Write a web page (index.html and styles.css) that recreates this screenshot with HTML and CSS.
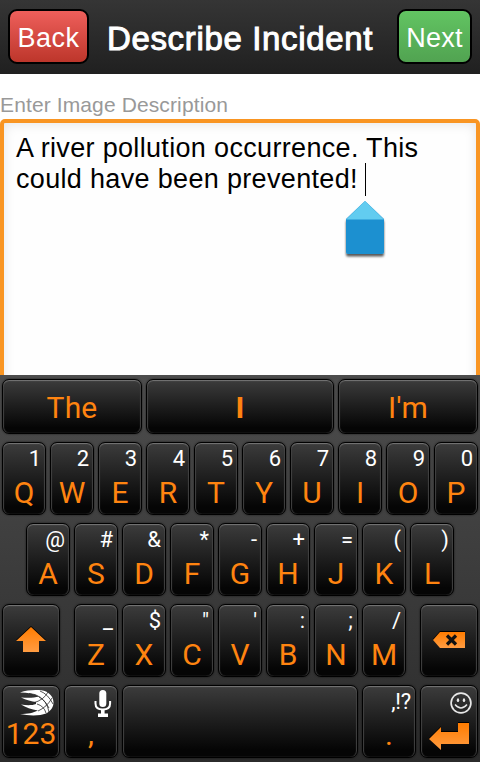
FILE: index.html
```html
<!DOCTYPE html>
<html lang="en">
<head>
<meta charset="utf-8">
<title>Describe Incident</title>
<link rel="stylesheet" href="styles.css">
</head>
<body>
<header class="bar">
  <button class="btn back">Back</button>
  <h1>Describe Incident</h1>
  <button class="btn next">Next</button>
</header>
<main class="form">
  <label class="label">Enter Image Description</label>
  <div class="field">A river pollution occurrence. This<br>could have been prevented! <span class="caret"><svg class="handle" width="46" height="62" viewBox="0 0 46 62"><defs><filter id="sh" x="-20%" y="-20%" width="140%" height="140%"><feDropShadow dx="0" dy="2.5" stdDeviation="1.3" flood-color="#000" flood-opacity=".65"/></filter></defs><path filter="url(#sh)" fill="#1f90d0" d="M23 3 42 21V54q0 2-2 2H6q-2 0-2-2V21z"/><path fill="#62ccf0" d="M23 3 42 21.5H4z"/></svg></span></div>
</main>
<section class="keyboard">
  <div class="suggest"><div class="key word">The</div><div class="key word strong">I</div><div class="key word">I'm</div></div>
  <div class="row">
    <div class="key"><i>1</i><b>Q</b></div><div class="key"><i>2</i><b>W</b></div><div class="key"><i>3</i><b>E</b></div><div class="key"><i>4</i><b>R</b></div><div class="key"><i>5</i><b>T</b></div><div class="key"><i>6</i><b>Y</b></div><div class="key"><i>7</i><b>U</b></div><div class="key"><i>8</i><b>I</b></div><div class="key"><i>9</i><b>O</b></div><div class="key"><i>0</i><b>P</b></div>
  </div>
  <div class="row">
    <div class="key"><i>@</i><b>A</b></div><div class="key"><i>#</i><b>S</b></div><div class="key"><i>&amp;</i><b>D</b></div><div class="key"><i>*</i><b>F</b></div><div class="key"><i>-</i><b>G</b></div><div class="key"><i>+</i><b>H</b></div><div class="key"><i>=</i><b>J</b></div><div class="key"><i>(</i><b>K</b></div><div class="key"><i>)</i><b>L</b></div>
  </div>
  <div class="row spread">
    <div class="key wide icon"><svg width="32" height="28" viewBox="0 0 32 28"><defs><linearGradient id="og" x2="0" y2="1"><stop stop-color="#ff7c00"/><stop offset="1" stop-color="#ff9c42"/></linearGradient></defs><path fill="#000" d="M16 0 31 14H24V25H8V14H1z"/><path fill="url(#og)" d="M16 1 31 15H24V26H8V15H1z"/></svg></div>
    <div class="letters">
    <div class="key"><i>_</i><b>Z</b></div><div class="key"><i>$</i><b>X</b></div><div class="key"><i>"</i><b>C</b></div><div class="key"><i>'</i><b>V</b></div><div class="key"><i>:</i><b>B</b></div><div class="key"><i>;</i><b>N</b></div><div class="key"><i>/</i><b>M</b></div>
    </div>
    <div class="key wide icon"><svg width="34" height="18" viewBox="0 0 34 18"><path fill="#000" d="M1 8 8 0H33V16H8z"/><path fill="url(#og)" d="M1 9 8 1H33V17H8z"/><path stroke="#111" stroke-width="3.2" d="m15 4.5 9 9m0-9-9 9"/></svg></div>
  </div>
  <div class="row bottom">
    <div class="key wide"><svg class="hint" width="34" height="26" viewBox="0 0 34 26"><path fill="#fff" d="M0 2.500C9-.5 20-.5 26 1.500c10 5 10 17 0 22-6 2.500-17 2.500-26 .5 8 0 13-1 18-3.500-7-1-12-3-17-6 6 1 11 1 15-.5v-2C12 11.500 6 10 1 7.500c7 .5 13 .5 18-1C14 4 8 2.500 0 2.500"/><path fill="none" stroke="#2a2a2a" stroke-width=".8" d="M9 3.500Q22 4 29 18M13 13Q24 10 28 2M18 21Q27 17 32 8M19 7Q27 11 29 22M17 14Q24 16 26 23M20 1Q28 4 33 14"/></svg><b>123</b></div>
    <div class="key mid"><svg class="hint mic" width="18" height="28" viewBox="0 0 18 28"><rect x="5.300" y="0" width="7" height="17" rx="3.500" fill="#fff"/><path fill="none" stroke="#fff" stroke-width="2" d="M1.500 11v2.500q0 6 7.300 6t7.300-6V11"/><path fill="#fff" d="M7 19h3.600v4.500H14V27H4v-3.500h3z"/></svg><b>,</b></div>
    <div class="key space"></div>
    <div class="key mid"><i class="punct">,!?</i><b>.</b></div>
    <div class="key wide"><svg class="hint face" width="22" height="22" viewBox="0 0 22 22"><circle cx="11" cy="11" r="9.900" fill="none" stroke="#e8e8e8" stroke-width="1.700"/><ellipse cx="8" cy="8.200" rx="1.200" ry="1.900" fill="#e8e8e8"/><ellipse cx="14" cy="8.200" rx="1.200" ry="1.900" fill="#e8e8e8"/><path d="M5 12.500Q11 19.500 17 12.500" fill="none" stroke="#e8e8e8" stroke-width="1.500"/></svg><svg class="enter" width="42" height="30" viewBox="0 0 42 30"><path fill="#000" d="M1 16 13 4V9H30V0H41V21H13V27z"/><path fill="url(#og)" d="M1 17 13 5V10H30V1H41V22H13V28z"/></svg></div>
  </div>
</section>
</body>
</html>
```

FILE: styles.css
```css
* { box-sizing: border-box; }
body {
  margin: 0;
  width: 480px;
  height: 762px;
  overflow: hidden;
  display: flex;
  flex-direction: column;
  background: #fff;
  font-family: "Liberation Sans", Arial, sans-serif;
}
.bar {
  height: 74px;
  flex: none;
  display: flex;
  justify-content: space-between;
  align-items: flex-start;
  padding: 9px 8px;
  background: linear-gradient(#353535, #202020);
}
h1 {
  margin: 0 6px 0 0;
  color: #fff;
  font-size: 33px;
  font-weight: 400;
  line-height: 59px;
  letter-spacing: .65px;
  white-space: nowrap;
  -webkit-text-stroke: 1px #fff;
}
.btn {
  height: 55px;
  padding: 2px 0 0;
  border: 2px solid #000;
  border-radius: 9px;
  color: #fff;
  font: 27px/50px "Liberation Sans", Arial, sans-serif;
}
.back { width: 81px; letter-spacing: .5px; background: linear-gradient(#ee5f5b, #bd362b); }
.next { width: 75px; letter-spacing: .3px; background: linear-gradient(#62c462, #51a351); }
.form {
  flex: none;
  height: 301px;
  padding-top: 19px;
  overflow: hidden;
}
.label {
  display: block;
  height: 26px;
  color: #999;
  font-size: 21px;
  line-height: 24px;
  letter-spacing: .12px;
}
.field {
  height: 290px;
  padding: 10px 12px;
  border: 4px solid #f99522;
  border-radius: 5px;
  background: #fefefe;
  box-shadow: inset 0 1px 12px rgba(0, 0, 0, .1);
  color: #000;
  font-size: 27px;
  line-height: 31px;
  letter-spacing: .33px;
  white-space: pre-wrap;
}
.caret {
  position: relative;
  display: inline-block;
  width: 1px;
  height: 33px;
  margin: -1px -1px 0 -1px;
  vertical-align: top;
  background: #000;
}
.handle { position: absolute; left: -23px; top: 35px; }
.keyboard {
  flex: 1;
  display: flex;
  flex-direction: column;
  gap: 8px;
  padding: 4px 2px;
  background: linear-gradient(#4d4d4d, #2b2b2b);
  font-family: Roboto, sans-serif;
  color: #ff8410;
}
.suggest { display: grid; grid-template: 55px / 140px 188px 140px; gap: 4px; flex: none; }
.row { display: flex; justify-content: center; gap: 4px; height: 73px; flex: none; }
.spread { justify-content: space-between; }
.letters { display: flex; gap: 4px; }
.key {
  width: 44px;
  display: flex;
  flex-direction: column;
  align-items: center;
  border: 1px solid #000;
  border-radius: 7px;
  background: linear-gradient(#3c3c3c, #202020 45%, #050505 90%);
  box-shadow: inset 0 1px 1px #777, inset 1px 0 1px #3c3c3c, inset -1px 0 1px #3c3c3c, 0 0 2px rgba(0, 0, 0, .7);
}
.suggest .key { width: auto; }
.key.wide { width: 58px; }
.key.mid { width: 54px; }
.key.space { width: 236px; }
.icon { justify-content: center; }
.icon svg { margin-bottom: 1px; }
.word { font-size: 30px; line-height: 55px; letter-spacing: .2px; }
.strong { font-weight: 700; }
.key i {
  align-self: flex-end;
  height: 31px;
  padding: 1px 4px 0 0;
  color: #fff;
  font-size: 22px;
  line-height: 29px;
  font-style: normal;
}
.key b { font-size: 30px; line-height: 38px; font-weight: 400; }
.bottom .key b { line-height: 36px; }
.hint { align-self: flex-end; flex: none; height: 26px; margin: 4px 5px 0 0; }
.mic { height: 28px; margin-bottom: -2px; }
.face { height: 22px; margin-top: 6px; }
.punct { letter-spacing: -.2px; }
.enter { margin-top: 8px; }
```
